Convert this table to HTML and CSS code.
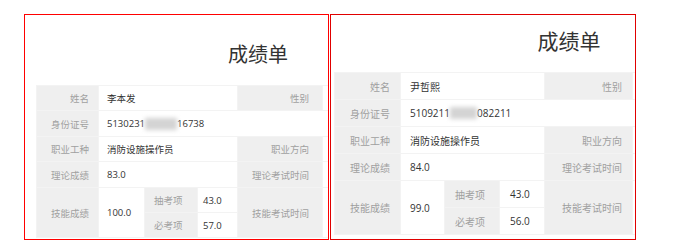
FILE: index.html
```html
<!DOCTYPE html>
<html lang="zh-CN">
<head>
<meta charset="utf-8">
<title>成绩单</title>
<link rel="stylesheet" href="styles.css">
</head>
<body>
<div class="page">
  <section class="sheet sheet-a">
    <div class="sheet-inner">
      <h1 class="title">成绩单</h1>
      <div class="grid">
        <div class="cell lab">姓名</div>
        <div class="cell val span3">李本发</div>
        <div class="cell lab lab2">性别</div>
        <div class="cell val"></div>

        <div class="cell lab">身份证号</div>
        <div class="cell val span5">5130231<span class="mask m6"></span>16738</div>

        <div class="cell lab">职业工种</div>
        <div class="cell val span3">消防设施操作员</div>
        <div class="cell lab lab2">职业方向</div>
        <div class="cell val"></div>

        <div class="cell lab">理论成绩</div>
        <div class="cell val span3">83.0</div>
        <div class="cell lab lab2">理论考试时间</div>
        <div class="cell val"></div>

        <div class="cell lab rows2">技能成绩</div>
        <div class="cell val rows2">100.0</div>
        <div class="cell lab sub">抽考项</div>
        <div class="cell val subval">43.0</div>
        <div class="cell lab lab2 rows2">技能考试时间</div>
        <div class="cell val rows2"></div>
        <div class="cell lab sub">必考项</div>
        <div class="cell val subval">57.0</div>
      </div>
    </div>
  </section>
  <section class="sheet sheet-b">
    <div class="sheet-inner">
      <h1 class="title">成绩单</h1>
      <div class="grid">
        <div class="cell lab">姓名</div>
        <div class="cell val span3">尹哲熙</div>
        <div class="cell lab lab2">性别</div>
        <div class="cell val"></div>

        <div class="cell lab">身份证号</div>
        <div class="cell val span5">5109211<span class="mask m5"></span>082211</div>

        <div class="cell lab">职业工种</div>
        <div class="cell val span3">消防设施操作员</div>
        <div class="cell lab lab2">职业方向</div>
        <div class="cell val"></div>

        <div class="cell lab">理论成绩</div>
        <div class="cell val span3">84.0</div>
        <div class="cell lab lab2">理论考试时间</div>
        <div class="cell val"></div>

        <div class="cell lab rows2">技能成绩</div>
        <div class="cell val rows2">99.0</div>
        <div class="cell lab sub">抽考项</div>
        <div class="cell val subval">43.0</div>
        <div class="cell lab lab2 rows2">技能考试时间</div>
        <div class="cell val rows2"></div>
        <div class="cell lab sub">必考项</div>
        <div class="cell val subval">56.0</div>
      </div>
    </div>
  </section>
</div>
</body>
</html>
```

FILE: styles.css
```css
* { box-sizing: border-box; }

html, body {
  margin: 0;
  padding: 0;
  background: #fff;
}

body {
  font-family: "Open Sans", "Noto Sans CJK SC", sans-serif;
  color: #333;
}

.page {
  display: flex;
  gap: 1px;
  padding: 14px 0 0 24px;
}

.sheet {
  height: 226px;
  overflow: hidden;
  border: 1px solid #ff0000;
  flex: none;
}

.sheet-a { width: 305px; }
.sheet-b { width: 306px; border-color: #e00000; }

.sheet-inner {
  flex: none;
}

.sheet-a .sheet-inner { width: 455px; padding: 20px 0 0 11px; }
.sheet-b .sheet-inner { width: 473px; padding: 6px 0 0 3px; }

.title {
  margin: 0;
  font-family: "Noto Sans CJK SC", sans-serif;
  font-weight: 400;
  color: #333;
  text-align: center;
  height: 38px;
  line-height: 38px;
}

.sheet-a .title { font-size: 20px; margin-bottom: 12px; }
.sheet-b .title { font-size: 21px; margin-bottom: 13px; }

.grid {
  display: grid;
  gap: 1px;
  padding: 1px;
  background: #f3f3f3;
}

.sheet-a .grid {
  grid-template-columns: 61px 45px 52px 39px 84px 1fr;
  grid-template-rows: 24px 25px 24px 25px 24px 24px;
  font-size: 9.5px;
}

.sheet-b .grid {
  grid-template-columns: 65px 43px 54px 44px 87px 1fr;
  grid-template-rows: 26px 26px 26px 26px 26px 26px;
  font-size: 10px;
}

.cell {
  display: flex;
  align-items: center;
  white-space: nowrap;
  overflow: hidden;
}

.lab {
  background: #efefef;
  color: #a0a0a0;
  justify-content: flex-end;
  font-family: "Noto Sans CJK SC", sans-serif;
}

.val {
  background: #fff;
  color: #333;
}

.sheet-a .lab { padding-right: 9px; }
.sheet-b .lab { padding-right: 10px; }
.sheet-a .lab2 { padding-right: 13px; }
.sheet-b .lab2 { padding-right: 10px; }

.sheet-a .val { padding-left: 8px; }
.sheet-b .val { padding-left: 9px; }

.sub { justify-content: flex-start; }
.sheet-a .sub { padding: 0 0 0 9px; }
.sheet-b .sub { padding: 0 0 0 10px; }

.sheet-a .subval { padding-left: 5px; }
.sheet-b .subval { padding-left: 10px; }

.span3 { grid-column: span 3; }
.span5 { grid-column: span 5; }
.rows2 { grid-row: span 2; }

.mask {
  display: inline-block;
  height: 12px;
  background: #d4d4d4;
  filter: blur(2px);
  vertical-align: middle;
}

.m6 { width: 32px; }
.m5 { width: 27px; }
```
